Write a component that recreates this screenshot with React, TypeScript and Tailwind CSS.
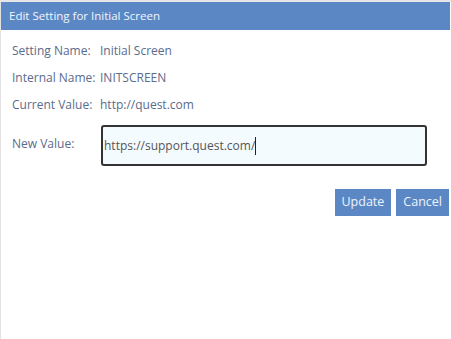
export default function App() {
    return (
        <div className="w-[451px] h-[339px] bg-white border-t-2 border-[#e6e6e6] overflow-hidden" style={{ fontFamily: '"Open Sans", "Noto Sans", sans-serif' }}>
            <div className="flex h-[337px] border-l border-[#e3e3e3]">
                <div className="flex-1 flex flex-col">
                    <div className="h-[28px] bg-[#5b88c5] flex items-center pl-2 text-[11.5px] text-[#f2f6fc] mr-[1px]">
                        Edit Setting for Initial Screen
                    </div>
                    <div className="flex flex-col text-[12px] text-[#5a6b8c] pl-[11px] pt-[7px]">
                        <div className="flex h-[27px] items-center">
                            <span className="w-[88px]">Setting Name:</span>
                            <span>Initial Screen</span>
                        </div>
                        <div className="flex h-[27px] items-center">
                            <span className="w-[88px]">Internal Name:</span>
                            <span>INITSCREEN</span>
                        </div>
                        <div className="flex h-[27px] items-center">
                            <span className="w-[88px]">Current Value:</span>
                            <span>http://quest.com</span>
                        </div>
                        <div className="flex items-center mt-[7px]">
                            <span className="w-[89px] -mt-[3px]">New Value:</span>
                            <div className="w-[326px] h-[41px] rounded-[3px] border-2 border-[#333] bg-[#f4fbff] flex items-center pl-[1px] text-[12px] text-[#555]">
                                https://support.quest.com/<span className="inline-block w-[1px] h-[18px] bg-[#222]"></span>
                            </div>
                        </div>
                        <div className="flex justify-end gap-[5px] mt-[23px] pr-[2px]">
                            <button className="h-[27px] px-[7px] bg-[#5b88c5] text-[#eef3fb] text-[12.5px]">Update</button>
                            <button className="h-[27px] px-[7px] bg-[#5b88c5] text-[#eef3fb] text-[12.5px]">Cancel</button>
                        </div>
                    </div>
                </div>
            </div>
        </div>
    );
}
